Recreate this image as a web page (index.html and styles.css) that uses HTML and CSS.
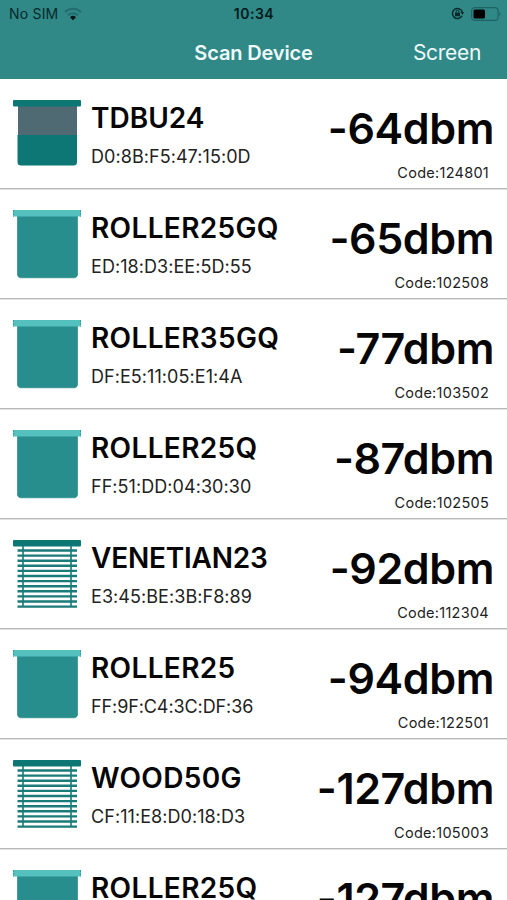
FILE: index.html
```html
<!DOCTYPE html>
<html lang="en">
<head>
<meta charset="utf-8">
<title>Scan Device</title>
<link rel="stylesheet" href="styles.css">
</head>
<body>
<svg class="defs" width="0" height="0" aria-hidden="true">
  <symbol id="tdbu" viewBox="0 0 68 70">
    <path fill="#4f6a72" d="M5 5h59v31H5z"/>
    <path fill="#0d7775" d="M4.500 35h59.500v27a3.500 3.500 0 0 1-3.500 3.500H8a3.500 3.500 0 0 1-3.500-3.500z"/>
    <rect width="68" height="6.500" rx="1" fill="#0d7775"/>
  </symbol>
  <symbol id="roller" viewBox="0 0 68 70">
    <path fill="#278d8d" stroke="#1b8080" stroke-width=".6" d="M4.500 5h60v60q-.5 2.500-3 2.800H7.500q-2.500-.3-3-2.800z"/>
    <path fill="#55c1bf" d="M0 0h68v6.500H0z"/>
    <path fill="none" stroke="#35a09e" stroke-width="1" stroke-dasharray="2 1" d="M.5 0v6.500M67.500 0v6.500"/>
  </symbol>
  <symbol id="venetian" viewBox="0 0 68 70">
    <path stroke="#2b8c88" stroke-width="1.800" d="M10 6v61M58 6v61"/>
    <path stroke="#1a7b78" stroke-width="2.400" d="M4.500 10.500h59.500M4.500 15.600h59.500M4.500 20.700h59.500M4.500 25.800h59.500M4.500 30.900h59.500M4.500 36h59.500M4.500 41.100h59.500M4.500 46.200h59.500M4.500 51.300h59.500M4.500 56.400h59.500M4.500 61.500h59.500M4.500 66.600h59.500"/>
    <rect width="68" height="6.500" rx="1" fill="#0d7775"/>
  </symbol>
</svg>
<header class="top">
  <div class="status">
    <div class="carrier"><span>No SIM</span>
      <svg width="18" height="14" viewBox="0 0 18 14" fill="none" stroke-width="2">
        <path stroke="#236d6d" d="M1 5a11.500 11.500 0 0 1 16 0"/>
        <path stroke="#236d6d" d="M4 8.300a7.200 7.200 0 0 1 10 0"/>
        <path fill="#021414" d="M9 13.200L6 10.300a4.300 4.300 0 0 1 6 0z"/>
      </svg>
    </div>
    <time class="clock">10:34</time>
    <div class="indicators">
      <svg width="13" height="13" viewBox="0 0 13 13" fill="none" stroke="#06292a" stroke-width="1.500">
        <path d="M10.900 8.800A5 5 0 1 1 11.300 5.300"/>
        <path fill="#06292a" stroke="none" d="M9.500 5h3.500l-1.500 3zM4 5.700h5v3.500H4z"/>
        <path stroke-width="1" d="M5.100 6V4.700a1.400 1.400 0 0 1 2.800 0V6"/>
      </svg>
      <svg width="31" height="14" viewBox="0 0 31 14">
        <rect x=".6" y=".6" width="26.500" height="12.800" rx="3.500" fill="none" stroke="#1f6262" stroke-width="1.100"/>
        <rect x="2.500" y="2.500" width="11.500" height="9" rx="1.500"/>
        <path fill="#1f6262" d="M28.300 4.800q2.400 2.200 0 4.400z"/>
      </svg>
    </div>
  </div>
  <nav class="nav"><h1>Scan Device</h1><a class="screen">Screen</a></nav>
</header>
<main class="list">
  <article class="row"><svg class="icon"><use href="#tdbu"/></svg><div class="info"><h2 class="plain">TDBU24</h2><p>D0:8B:F5:47:15:0D</p></div><div class="signal"><strong>-64dbm</strong><span>Code:124801</span></div></article>
  <article class="row"><svg class="icon"><use href="#roller"/></svg><div class="info"><h2>ROLLER25GQ</h2><p>ED:18:D3:EE:5D:55</p></div><div class="signal"><strong>-65dbm</strong><span>Code:102508</span></div></article>
  <article class="row"><svg class="icon"><use href="#roller"/></svg><div class="info"><h2>ROLLER35GQ</h2><p>DF:E5:11:05:E1:4A</p></div><div class="signal"><strong>-77dbm</strong><span>Code:103502</span></div></article>
  <article class="row"><svg class="icon"><use href="#roller"/></svg><div class="info"><h2>ROLLER25Q</h2><p>FF:51:DD:04:30:30</p></div><div class="signal"><strong>-87dbm</strong><span>Code:102505</span></div></article>
  <article class="row"><svg class="icon"><use href="#venetian"/></svg><div class="info"><h2 class="tight">VENETIAN23</h2><p>E3:45:BE:3B:F8:89</p></div><div class="signal"><strong>-92dbm</strong><span>Code:112304</span></div></article>
  <article class="row"><svg class="icon"><use href="#roller"/></svg><div class="info"><h2>ROLLER25</h2><p class="tight-id">FF:9F:C4:3C:DF:36</p></div><div class="signal"><strong>-94dbm</strong><span>Code:122501</span></div></article>
  <article class="row"><svg class="icon"><use href="#venetian"/></svg><div class="info"><h2>WOOD50G</h2><p>CF:11:E8:D0:18:D3</p></div><div class="signal"><strong>-127dbm</strong><span>Code:105003</span></div></article>
  <article class="row"><svg class="icon"><use href="#roller"/></svg><div class="info"><h2>ROLLER25Q</h2></div><div class="signal"><strong>-127dbm</strong></div></article>
</main>
</body>
</html>
```
FILE: styles.css
```css
* { box-sizing: border-box; margin: 0; padding: 0; }
body {
  height: 900px;
  overflow: hidden;
  background: #fff;
  color: #060606;
  font-family: Inter, "Liberation Sans", sans-serif;
}
.defs { display: block; }
.top { height: 79px; background: #308887; }
.status {
  display: grid;
  grid-template-columns: 1fr auto 1fr;
  align-items: center;
  height: 27px;
  padding: 0 5px 0 9px;
  color: #06292a;
  font-size: 14px;
  line-height: 27px;
}
.carrier { display: flex; align-items: center; gap: 6px; letter-spacing: .2px; }
.clock { margin-right: 3px; color: #031a1b; font-weight: 600; letter-spacing: .5px; }
.indicators { display: flex; justify-content: flex-end; align-items: center; gap: 7px; }
.nav {
  display: grid;
  grid-template-columns: 1fr auto 1fr;
  height: 52px;
  padding: 0 26px;
  color: #eefafa;
  line-height: 52px;
}
.nav h1 { grid-column: 2; font-size: 20px; font-weight: 600; letter-spacing: -.15px; }
.screen { justify-self: end; font-size: 21px; letter-spacing: -.3px; }
.list { height: 821px; overflow: hidden; }
.row {
  display: flex;
  height: 110px;
  padding: 0 13px;
  background: linear-gradient(#b8b8b8, #b8b8b8) 0 108px / 100% 1px no-repeat;
  border-top: 1px solid #e2e2e2;
}
.row:first-child { border-top-color: #fff; }
.row:first-child .icon { margin-top: 20px; }
.icon { flex: none; width: 68px; height: 70px; margin: 20px 10px 0 0; }
.info { flex: 1; padding-top: 18px; white-space: nowrap; }
.info h2 { font-size: 28px; font-weight: 600; line-height: 41px; letter-spacing: .35px; }
.info .plain { letter-spacing: 0; }
.info .tight { letter-spacing: -.2px; }
.info p { color: #222; font-size: 18px; line-height: 36px; letter-spacing: .06px; }
.info .tight-id { letter-spacing: -.1px; }
.signal { display: flex; flex-direction: column; align-items: flex-end; padding-top: 18px; }
.signal strong { font-size: 43px; font-weight: 600; line-height: 60px; letter-spacing: -.4px; }
.signal span { margin: 1px 5px 0 0; color: #222; font-size: 14.500px; line-height: 28px; letter-spacing: .27px; }
```
